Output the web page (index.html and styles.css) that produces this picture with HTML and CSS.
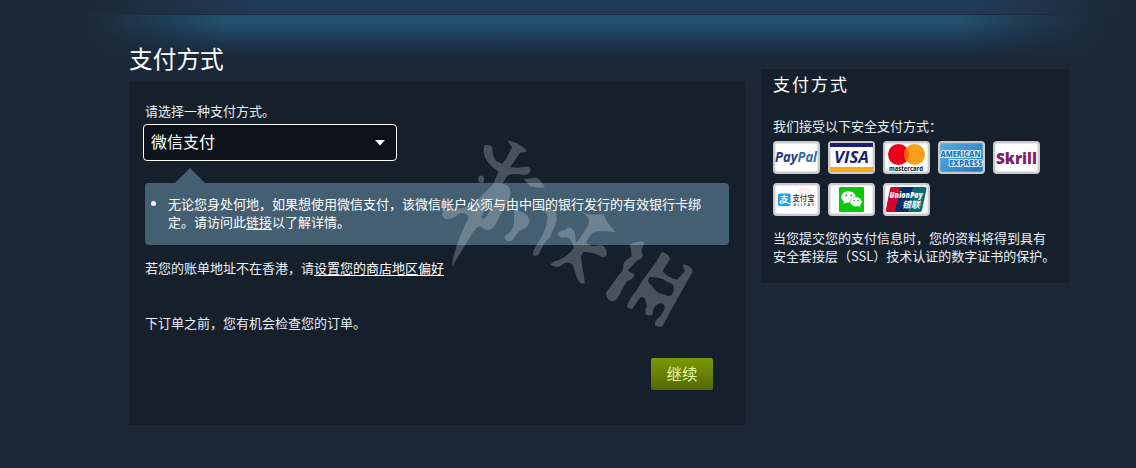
FILE: index.html
```
<!DOCTYPE html>
<html lang="zh-CN">
<head>
    <meta charset="UTF-8">
    <meta name="viewport" content="width=device-width, initial-scale=1.0">
    <title>支付方式</title>
    <link rel="stylesheet" href="styles.css">
</head>
<body>
    <div class="top-bar"></div>
    <div class="top-glow"></div>

    <div class="page">
        <div class="main-col">
            <h1>支付方式</h1>
            <form class="payment-box" onsubmit="return false">
                <label class="select-label">请选择一种支付方式。</label>
                <div class="select" tabindex="0">
                    <span>微信支付</span>
                    <svg class="arrow" width="10" height="6" viewBox="0 0 10 6"><path d="M0 0H10L5 5.5Z" fill="#fff"/></svg>
                </div>
                <div class="notice">
                    <ul>
                        <li>无论您身处何地，如果想使用微信支付，该微信帐户必须与由中国的银行发行的有效银行卡绑定。请访问此<a href="#">链接</a>以了解详情。</li>
                    </ul>
                </div>
                <p class="region">若您的账单地址不在香港，请<a href="#">设置您的商店地区偏好</a></p>
                <p class="review">下订单之前，您有机会检查您的订单。</p>
                <div class="actions"><button class="btn-continue">继续</button></div>
            </form>
        </div>

        <div class="side-col">
            <h2>支付方式</h2>
            <p>我们接受以下安全支付方式：</p>
            <div class="cards">
                <div class="card">
                    <svg viewBox="0 0 43 29"><text x="0" y="18.5" class="paypal" textLength="42" lengthAdjust="spacingAndGlyphs"><tspan fill="#253b80">Pay</tspan><tspan fill="#2f6fa8">Pal</tspan></text></svg>
                </div>
                <div class="card">
                    <svg viewBox="0 0 43 29"><path d="M0 0H43V4H0Z" fill="#1a1f71"/><path d="M0 24H43V29H0Z" fill="#f7a81b"/><text x="4" y="19.5" class="visa" textLength="35" lengthAdjust="spacingAndGlyphs">VISA</text></svg>
                </div>
                <div class="card">
                    <svg viewBox="0 0 43 29"><circle cx="13.5" cy="11.5" r="10.5" fill="#eb001b"/><circle cx="29.5" cy="11.5" r="10.5" fill="#f79e1b"/><path d="M21.5 4.7A10.5 10.5 0 0 1 21.5 18.3A10.5 10.5 0 0 1 21.5 4.7Z" fill="#ff5f00"/><text x="4" y="27.5" class="mastercard" textLength="34" lengthAdjust="spacingAndGlyphs">mastercard</text></svg>
                </div>
                <div class="card amex">
                    <svg viewBox="0 0 43 29"><text x="0.5" y="13.5" textLength="40" lengthAdjust="spacingAndGlyphs">AMERICAN</text><text x="9" y="22.5" textLength="33.5" lengthAdjust="spacingAndGlyphs">EXPRESS</text></svg>
                </div>
                <div class="card">
                    <svg viewBox="0 0 43 29"><text x="1" y="20.5" class="skrill" textLength="41" lengthAdjust="spacingAndGlyphs">Skrill</text></svg>
                </div>
                <div class="card">
                    <svg viewBox="0 0 43 29">
                        <path d="M24 3H34V9H24Z" fill="#fdeee8"/>
                        <rect x="3" y="8.5" width="12.5" height="12.5" rx="1.5" fill="#1e9fe8"/>
                        <path d="M5.5 11.5H13M9.2 9.7V13.7M6.3 13.8H12Q11 17 7.5 18.2Q4.8 18.5 5 16.8Q6 15 10 16.8L15 19" fill="none" stroke="#fff" stroke-width="1.2"/>
                        <text x="17.5" y="15.5" class="alipay" textLength="22" lengthAdjust="spacingAndGlyphs">支付宝</text>
                        <text x="18.5" y="21.2" class="alipay-en" textLength="20.5">ALIPAY</text>
                    </svg>
                </div>
                <div class="card">
                    <svg viewBox="0 0 43 29">
                        <rect x="9" y="2" width="25" height="25" rx="1" fill="#09ca09"/>
                        <path d="M18.5 6.2C14 6.2 11.4 8.7 11.4 12C11.4 14 12.5 15.5 14 16.5L13.4 19L16.2 17.6Q17.8 18 19.5 17.8A6.5 6.5 0 0 1 25.8 11.5C25 8.3 22.2 6.2 18.5 6.2Z" fill="#fff"/>
                        <path d="M25.8 12.2C22.5 12.2 20.3 14.2 20.3 16.8C20.3 19.5 22.8 21.4 25.8 21.4L28.2 21L30.4 22.3L29.8 20.2C31 19.3 31.7 18.2 31.7 16.8C31.7 14.2 29 12.2 25.8 12.2Z" fill="#fff"/>
                        <g fill="#09ca09"><circle cx="16.2" cy="10.5" r="1"/><circle cx="21.2" cy="10.5" r="1"/><circle cx="24" cy="15.5" r=".8"/><circle cx="28" cy="15.5" r=".8"/></g>
                    </svg>
                </div>
                <div class="card">
                    <svg viewBox="0 0 43 29">
                        <path d="M6 2H17L11 27H2Q.5 27 .8 25L5 4Q5.3 2 6 2Z" fill="#d10429"/>
                        <path d="M17 2H31L25 27H11Q10 27 10.3 25L15 4Q15.4 2 17 2Z" fill="#022e64"/>
                        <path d="M30 2H40Q42 2 41.5 4L37 25Q36.5 27 35 27H23.5Q22.5 27 23 25L27.5 4Q28 2 30 2Z" fill="#076f74"/>
                        <text x="4.5" y="13" class="union" textLength="33" lengthAdjust="spacingAndGlyphs">UnionPay</text>
                        <text x="17" y="23" class="union-cn" textLength="18" lengthAdjust="spacingAndGlyphs">银联</text>
                    </svg>
                </div>
            </div>
            <p>当您提交您的支付信息时，您的资料将得到具有安全套接层（SSL）技术认证的数字证书的保护。</p>
        </div>
    </div>

    <!-- brush watermark over the form -->
    <svg class="watermark" viewBox="0 0 960 630">
        <path fill-rule="evenodd" d="M232 31Q271 38 291 63Q281 69 271 67L241 111Q263 116 281 111Q299 106 302 121Q299 135 280 135Q249 128 232 137L217 162Q239 163 242 186Q242 205 222 232L198 281Q185 304 165 299L149 289Q137 292 124 315L66 410Q67 379 94 310L116 263Q110 247 90 249Q69 269 49 268Q37 264 36 250Q41 238 58 240L116 231Q133 222 145 207L188 165L206 125Q176 107 165 82Q157 57 164 46Q181 42 187 52Q186 75 198 93L217 101Q237 76 246 52ZM181 210L154 260Q158 272 169 260L193 220Q195 207 181 210Z"/>
        <path d="M147 139Q157 132 163 143Q163 157 156 160Q148 159 144 149ZM281 147L320 143Q333 151 345 172Q322 176 300 169ZM252 239L278 246Q298 257 300 276Q291 294 267 304L245 332Q228 338 223 322Q225 313 243 306Q254 284 252 266Z"/>
        <path d="M340 232L374 240Q383 253 379 275L360 321Q342 336 328 370Q321 381 310 376Q307 366 315 354L338 314Q356 275 351 254Z"/>
        <path d="M454 246Q487 259 520 252Q525 270 557 307Q527 302 501 304Q478 311 468 338Q486 354 509 345Q532 348 530 374Q526 383 514 381Q490 365 461 366L452 379L465 459Q450 467 440 441L428 404Q409 389 392 408Q372 416 361 403Q370 393 389 389Q417 376 432 353Q423 321 404 320Q390 328 383 311Q385 302 406 299L415 291Q433 295 435 313L438 340Q456 318 473 288Q488 266 454 246Z"/>
        <path d="M609 339Q629 330 644 338Q638 349 634 361L639 378Q634 388 620 393L594 421Q602 430 614 431Q613 446 590 454L564 502Q553 519 538 511Q528 502 528 488L567 434Q579 425 580 407Q578 395 605 379Q603 350 598 344Z"/>
        <path fill-rule="evenodd" d="M696 366Q719 373 720 388L698 422Q709 442 741 449L765 423Q758 410 759 403Q781 406 789 423L723 541L698 588Q687 594 674 585Q676 567 690 561L704 537Q706 520 690 520Q668 528 669 551Q660 562 646 551Q644 541 651 528L645 507Q636 494 624 511L607 536Q594 538 591 528Q594 513 620 481Q630 462 649 436L679 395ZM658 441Q649 458 664 466L679 484Q687 493 706 494Q721 505 728 490Q736 476 728 463Q708 456 700 448Q677 440 658 441Z"/>
    </svg>
</body>
</html>
```
FILE: styles.css
```
* {
    box-sizing: border-box;
}

body {
    margin: 0;
    height: 468px;
    overflow: hidden;
    background-color: #1b2838;
    color: #e8eef3;
    font-family: "Noto Sans CJK SC", sans-serif;
    font-size: 13px;
    line-height: 18px;
}

h1, h2, p, ul {
    margin: 0;
    font-weight: normal;
}

a {
    color: #fff;
    text-decoration: underline;
    text-underline-offset: 2px;
}

.top-bar {
    height: 15px;
    border-bottom: 1px solid #1d2b3f;
    background: linear-gradient(90deg, #1b2838 90px, #213b57 260px, #213b57 980px, #1b2838 1125px);
}

.top-glow {
    height: 45px;
    background:
        linear-gradient(90deg, #1b2838 85px, rgba(27, 40, 56, 0.6) 145px, transparent 225px, transparent 960px, rgba(27, 40, 56, 0.6) 1035px, #1b2838 1110px),
        linear-gradient(180deg, #22506f 0, #22506f 7px, #1f4460 17px, #1c334a 30px, #1b2838 44px);
}

.page {
    display: flex;
    align-items: flex-start;
    gap: 16px;
    margin-top: -15px;
    padding-left: 129px;
}

.main-col {
    width: 616px;
}

h1 {
    height: 37px;
    color: #fff;
    font-size: 23.7px;
    line-height: 27px;
}

.payment-box {
    height: 343px;
    padding: 20px 16px 0;
    background: #16202c;
}

.select-label {
    display: block;
}

.select {
    display: flex;
    align-items: center;
    justify-content: space-between;
    width: 254px;
    height: 37px;
    margin: 4px 0 0 -2px;
    padding: 0 11px 0 7px;
    border: 1px solid #fff;
    border-radius: 4px;
    outline: none;
    background: #0d131b;
    color: #fff;
    font-size: 16px;
}

.select span {
    padding-bottom: 3px;
}

.notice {
    height: 62px;
    margin-top: 22px;
    padding: 13px 23px;
    border-radius: 4px;
    background: #455f72;
    color: #fff;
}

.notice::before {
    content: "";
    display: block;
    width: 30px;
    height: 15px;
    margin: -28px 0 12px 7px;
    background: #455f72;
    clip-path: polygon(50% 0, 100% 100%, 0 100%);
}

.notice ul {
    padding: 0;
}

.region {
    margin-top: 14px;
}

.review {
    margin-top: 37px;
}

.actions {
    display: flex;
    justify-content: flex-end;
    padding: 26px 16px 0 0;
}

.btn-continue {
    width: 62px;
    height: 32px;
    padding: 0 0 2px;
    border: none;
    border-radius: 2px;
    background: linear-gradient(180deg, #799905 0, #536904 100%);
    color: #e5f79b;
    font-family: inherit;
    font-size: 15.5px;
    cursor: pointer;
}

.side-col {
    width: 308px;
    height: 214px;
    margin-top: 24px;
    padding: 3px 12px 0;
    background: #16202c;
}

h2 {
    margin-bottom: 21px;
    color: #fff;
    font-size: 17px;
    line-height: 24px;
    letter-spacing: 2px;
}

.cards {
    display: grid;
    grid-template-columns: repeat(5, 47px);
    gap: 9px 8px;
    margin: 6px 0 13px;
}

.card {
    height: 33px;
    border: 2px solid #c9c9cb;
    border-radius: 4px;
    background: #fff;
    box-shadow: inset 0 0 2px #bbb;
}

.card svg {
    display: block;
    width: 43px;
    height: 29px;
}

.card text {
    font-family: "Open Sans", sans-serif;
    font-weight: 800;
}

.card .paypal {
    font-size: 13.5px;
    font-style: italic;
    font-weight: 700;
}

.card .visa {
    fill: #1a1f71;
    font-size: 16px;
    font-style: italic;
    font-weight: 700;
}

.card .mastercard {
    fill: #111;
    font-size: 6.5px;
    font-weight: 700;
}

.card.amex {
    background: linear-gradient(135deg, #58aee0, #1c75bd);
}

.amex text {
    fill: #1976bc;
    stroke: #fff;
    stroke-width: 1.6px;
    paint-order: stroke;
    font-size: 8px;
}

.card .skrill {
    fill: #811e68;
    font-size: 16px;
}

.card .alipay {
    fill: #333;
    font-family: "Noto Sans CJK SC", sans-serif;
    font-size: 8px;
    font-weight: 500;
}

.card .alipay-en {
    fill: #333;
    font-size: 4px;
    font-weight: 600;
}

.card .union {
    fill: #fff;
    font-size: 8px;
    font-style: italic;
}

.card .union-cn {
    fill: #fff;
    font-family: "Noto Sans CJK SC", sans-serif;
    font-size: 9px;
    font-style: italic;
    font-weight: 700;
}

.watermark {
    position: absolute;
    top: 130px;
    left: 430px;
    width: 320px;
    height: 210px;
    fill: rgba(255, 255, 255, 0.22);
    pointer-events: none;
}
```
